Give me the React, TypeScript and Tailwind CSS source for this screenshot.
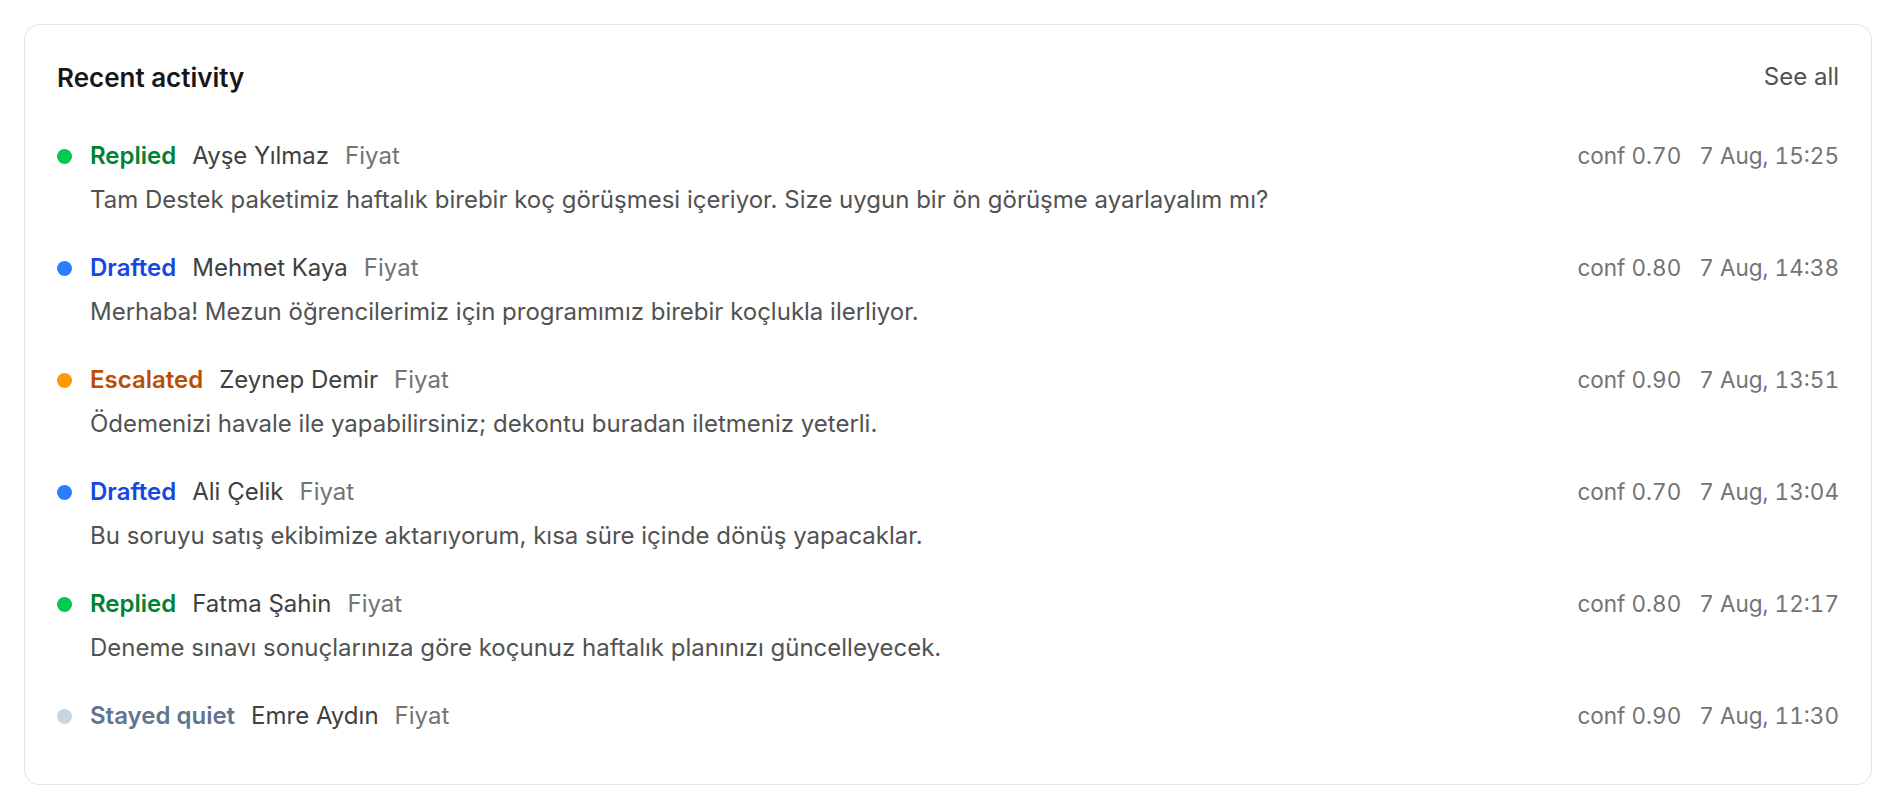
type Status = "replied" | "drafted" | "escalated" | "quiet";

interface Activity {
  status: Status;
  name: string;
  topic: string;
  message?: string;
  conf: string;
  time: string;
}

const statusStyles: Record<Status, { label: string; dot: string; text: string }> = {
  replied: { label: "Replied", dot: "bg-green-500", text: "text-green-700" },
  drafted: { label: "Drafted", dot: "bg-blue-500", text: "text-blue-700" },
  escalated: { label: "Escalated", dot: "bg-amber-500", text: "text-amber-700" },
  quiet: { label: "Stayed quiet", dot: "bg-slate-300", text: "text-slate-500" },
};

const activities: Activity[] = [
  {
    status: "replied",
    name: "Ayşe Yılmaz",
    topic: "Fiyat",
    message:
      "Tam Destek paketimiz haftalık birebir koç görüşmesi içeriyor. Size uygun bir ön görüşme ayarlayalım mı?",
    conf: "0.70",
    time: "7 Aug, 15:25",
  },
  {
    status: "drafted",
    name: "Mehmet Kaya",
    topic: "Fiyat",
    message: "Merhaba! Mezun öğrencilerimiz için programımız birebir koçlukla ilerliyor.",
    conf: "0.80",
    time: "7 Aug, 14:38",
  },
  {
    status: "escalated",
    name: "Zeynep Demir",
    topic: "Fiyat",
    message: "Ödemenizi havale ile yapabilirsiniz; dekontu buradan iletmeniz yeterli.",
    conf: "0.90",
    time: "7 Aug, 13:51",
  },
  {
    status: "drafted",
    name: "Ali Çelik",
    topic: "Fiyat",
    message: "Bu soruyu satış ekibimize aktarıyorum, kısa süre içinde dönüş yapacaklar.",
    conf: "0.70",
    time: "7 Aug, 13:04",
  },
  {
    status: "replied",
    name: "Fatma Şahin",
    topic: "Fiyat",
    message: "Deneme sınavı sonuçlarınıza göre koçunuz haftalık planınızı güncelleyecek.",
    conf: "0.80",
    time: "7 Aug, 12:17",
  },
  {
    status: "quiet",
    name: "Emre Aydın",
    topic: "Fiyat",
    conf: "0.90",
    time: "7 Aug, 11:30",
  },
];

function ActivityRow({ activity }: { activity: Activity }) {
  const s = statusStyles[activity.status];
  return (
    <li className="flex flex-col gap-4 py-5">
      <div className="flex h-7 items-center justify-between">
        <div className="flex items-center gap-4">
          <span className={`mr-[2px] size-[15px] shrink-0 rounded-full ${s.dot}`} />
          <span className={`font-semibold ${s.text}`}>{s.label}</span>
          <span className="text-neutral-700">{activity.name}</span>
          <span className="text-neutral-500">{activity.topic}</span>
        </div>
        <div className="flex items-center gap-[18px] text-[22.5px] tabular-nums text-neutral-500">
          <span>conf {activity.conf}</span>
          <span>{activity.time}</span>
        </div>
      </div>
      {activity.message && (
        <p className="ml-[33px] h-7 text-neutral-600">{activity.message}</p>
      )}
    </li>
  );
}

export default function App() {
  return (
    <div className="min-h-screen bg-white p-6 font-['Inter',sans-serif]">
      <section className="rounded-[15px] border border-neutral-200 bg-white px-8 pt-[33px] pb-[34px]">
        <header className="flex h-[38px] items-center justify-between">
          <h2 className="text-[26px] font-semibold text-neutral-900">Recent activity</h2>
          <button className="text-[24px] text-neutral-600">See all</button>
        </header>
        <ul className="mt-[26px] text-[24px] leading-7">
          {activities.map((a) => (
            <ActivityRow key={a.time} activity={a} />
          ))}
        </ul>
      </section>
    </div>
  );
}
